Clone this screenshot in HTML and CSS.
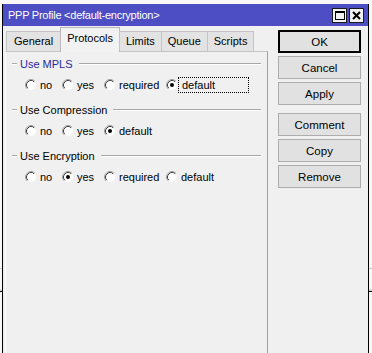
FILE: index.html
```html
<!DOCTYPE html>
<html>
<head>
<meta charset="utf-8">
<link rel="stylesheet" href="styles.css">
</head>
<body>
<div class="topstrip"></div>
<div class="window">
  <div class="titlebar">
    <span class="title">PPP Profile &lt;default-encryption&gt;</span>
    <div class="tbtns">
      <span class="tbtn"><svg width="10" height="9" viewBox="0 0 10 9"><rect x="0.5" y="0.5" width="9" height="8" fill="none" stroke="#000"/><rect x="0" y="0" width="10" height="2" fill="#000"/></svg></span>
      <span class="tbtn"><svg width="9" height="9" viewBox="0 0 9 9"><path d="M1 1 L8 8 M8 1 L1 8" stroke="#000" stroke-width="2"/></svg></span>
    </div>
  </div>
  <div class="content">
    <div class="leftcol">
      <div class="tabs">
        <span class="tab">General</span>
        <span class="tab active">Protocols</span>
        <span class="tab">Limits</span>
        <span class="tab">Queue</span>
        <span class="tab">Scripts</span>
      </div>
      <div class="panel">
        <div class="group">
          <div class="ghead blue"><span class="dash"></span><span class="gtitle">Use MPLS</span><span class="gline"></span></div>
          <div class="radios">
            <span class="radio w-no"><svg class="rb" viewBox="0 0 12 12"><circle cx="6" cy="6" r="5" fill="#fff"/><path d="M2.11 9.89 A5.5 5.5 0 0 1 9.89 2.11" fill="none" stroke="#a0a0a0"/><path d="M2.82 9.18 A4.5 4.5 0 0 1 9.18 2.82" fill="none" stroke="#404040"/></svg><span class="rl">no</span></span>
            <span class="radio w-yes"><svg class="rb" viewBox="0 0 12 12"><circle cx="6" cy="6" r="5" fill="#fff"/><path d="M2.11 9.89 A5.5 5.5 0 0 1 9.89 2.11" fill="none" stroke="#a0a0a0"/><path d="M2.82 9.18 A4.5 4.5 0 0 1 9.18 2.82" fill="none" stroke="#404040"/></svg><span class="rl">yes</span></span>
            <span class="radio w-req"><svg class="rb" viewBox="0 0 12 12"><circle cx="6" cy="6" r="5" fill="#fff"/><path d="M2.11 9.89 A5.5 5.5 0 0 1 9.89 2.11" fill="none" stroke="#a0a0a0"/><path d="M2.82 9.18 A4.5 4.5 0 0 1 9.18 2.82" fill="none" stroke="#404040"/></svg><span class="rl">required</span></span>
            <span class="radio"><svg class="rb" viewBox="0 0 12 12"><circle cx="6" cy="6" r="5" fill="#fff"/><path d="M2.11 9.89 A5.5 5.5 0 0 1 9.89 2.11" fill="none" stroke="#a0a0a0"/><path d="M2.82 9.18 A4.5 4.5 0 0 1 9.18 2.82" fill="none" stroke="#404040"/><circle cx="6" cy="6" r="2" fill="#000"/></svg><span class="rl focus">default</span></span>
          </div>
        </div>
        <div class="group">
          <div class="ghead"><span class="dash"></span><span class="gtitle">Use Compression</span><span class="gline"></span></div>
          <div class="radios">
            <span class="radio w-no"><svg class="rb" viewBox="0 0 12 12"><circle cx="6" cy="6" r="5" fill="#fff"/><path d="M2.11 9.89 A5.5 5.5 0 0 1 9.89 2.11" fill="none" stroke="#a0a0a0"/><path d="M2.82 9.18 A4.5 4.5 0 0 1 9.18 2.82" fill="none" stroke="#404040"/></svg><span class="rl">no</span></span>
            <span class="radio w-yes"><svg class="rb" viewBox="0 0 12 12"><circle cx="6" cy="6" r="5" fill="#fff"/><path d="M2.11 9.89 A5.5 5.5 0 0 1 9.89 2.11" fill="none" stroke="#a0a0a0"/><path d="M2.82 9.18 A4.5 4.5 0 0 1 9.18 2.82" fill="none" stroke="#404040"/></svg><span class="rl">yes</span></span>
            <span class="radio"><svg class="rb" viewBox="0 0 12 12"><circle cx="6" cy="6" r="5" fill="#fff"/><path d="M2.11 9.89 A5.5 5.5 0 0 1 9.89 2.11" fill="none" stroke="#a0a0a0"/><path d="M2.82 9.18 A4.5 4.5 0 0 1 9.18 2.82" fill="none" stroke="#404040"/><circle cx="6" cy="6" r="2" fill="#000"/></svg><span class="rl">default</span></span>
          </div>
        </div>
        <div class="group">
          <div class="ghead"><span class="dash"></span><span class="gtitle">Use Encryption</span><span class="gline"></span></div>
          <div class="radios">
            <span class="radio w-no"><svg class="rb" viewBox="0 0 12 12"><circle cx="6" cy="6" r="5" fill="#fff"/><path d="M2.11 9.89 A5.5 5.5 0 0 1 9.89 2.11" fill="none" stroke="#a0a0a0"/><path d="M2.82 9.18 A4.5 4.5 0 0 1 9.18 2.82" fill="none" stroke="#404040"/></svg><span class="rl">no</span></span>
            <span class="radio w-yes"><svg class="rb" viewBox="0 0 12 12"><circle cx="6" cy="6" r="5" fill="#fff"/><path d="M2.11 9.89 A5.5 5.5 0 0 1 9.89 2.11" fill="none" stroke="#a0a0a0"/><path d="M2.82 9.18 A4.5 4.5 0 0 1 9.18 2.82" fill="none" stroke="#404040"/><circle cx="6" cy="6" r="2" fill="#000"/></svg><span class="rl">yes</span></span>
            <span class="radio w-req"><svg class="rb" viewBox="0 0 12 12"><circle cx="6" cy="6" r="5" fill="#fff"/><path d="M2.11 9.89 A5.5 5.5 0 0 1 9.89 2.11" fill="none" stroke="#a0a0a0"/><path d="M2.82 9.18 A4.5 4.5 0 0 1 9.18 2.82" fill="none" stroke="#404040"/></svg><span class="rl">required</span></span>
            <span class="radio"><svg class="rb" viewBox="0 0 12 12"><circle cx="6" cy="6" r="5" fill="#fff"/><path d="M2.11 9.89 A5.5 5.5 0 0 1 9.89 2.11" fill="none" stroke="#a0a0a0"/><path d="M2.82 9.18 A4.5 4.5 0 0 1 9.18 2.82" fill="none" stroke="#404040"/></svg><span class="rl">default</span></span>
          </div>
        </div>
      </div>
    </div>
    <div class="rightcol">
      <button class="btn default">OK</button>
      <button class="btn">Cancel</button>
      <button class="btn">Apply</button>
      <button class="btn sep">Comment</button>
      <button class="btn">Copy</button>
      <button class="btn">Remove</button>
    </div>
  </div>
</div>
</body>
</html>
```
FILE: styles.css
```css
html, body {
  margin: 0;
  padding: 0;
}
body {
  width: 372px;
  height: 353px;
  overflow: hidden;
  font-family: "Liberation Sans", Arial, sans-serif;
  font-size: 11px;
  color: #000;
  background:
    linear-gradient(#c8c8c8, #c8c8c8) 0 268px / 100% 1px no-repeat,
    linear-gradient(#dcdcdc, #dcdcdc) 0 289px / 100% 2px no-repeat,
    linear-gradient(#000, #000) 0 291px / 100% 1px no-repeat,
    #f8f8f8;
}
.topstrip {
  height: 4px;
}
.window {
  margin-left: 2px;
  width: 367px;
  box-sizing: border-box;
  border-left: 1px solid #000;
  border-right: 1px solid #000;
  height: 349px;
  display: flex;
  flex-direction: column;
}
.titlebar {
  height: 22px;
  background: #4e4ec4;
  display: flex;
  align-items: center;
  padding-left: 5px;
  padding-right: 4px;
}
.title {
  color: #fff;
  font-size: 11px;
  letter-spacing: -0.25px;
  flex: 1;
}
.tbtns {
  display: flex;
  gap: 2px;
}
.tbtn {
  width: 13px;
  height: 13px;
  background: #f2f2f2;
  border: 1px solid #1a1a1a;
  display: flex;
  align-items: center;
  justify-content: center;
}
.tbtn svg {
  display: block;
}
.content {
  flex: 1;
  display: flex;
  background: #f0f0f0;
}
.leftcol {
  width: 265px;
  padding-left: 2px;
  box-sizing: border-box;
  display: flex;
  flex-direction: column;
}
.tabs {
  height: 25px;
  display: flex;
  align-items: flex-end;
  padding-left: 1px;
  position: relative;
  z-index: 1;
}
.tab {
  height: 19px;
  line-height: 19px;
  padding: 0 6px;
  background: #e3e3e3;
  border: 1px solid #c4c4c4;
  border-bottom: none;
  margin-right: -1px;
}
.tab:first-child {
  padding: 0 7px;
}
.tab.active {
  height: 24px;
  line-height: 20px;
  background: #f2f2f2;
  border-color: #b8b8b8;
  padding: 0 6px;
  margin-bottom: -1px;
}
.panel {
  flex: 1;
  border-top: 1px solid #c4c4c4;
  border-left: 1px solid #fff;
  border-right: 1px solid #a0a0a0;
  padding-top: 5px;
}
.group {
  margin-bottom: 10px;
}
.ghead {
  display: flex;
  align-items: center;
  height: 14px;
  padding-left: 6px;
  padding-right: 6px;
}
.ghead.blue .gtitle {
  color: #2a2aa0;
}
.dash {
  width: 5px;
  border-top: 1px solid #a8a8a8;
  border-bottom: 1px solid #fff;
  margin-right: 3px;
}
.gtitle {
  font-size: 11px;
  line-height: 14px;
}
.gline {
  flex: 1;
  border-top: 1px solid #a8a8a8;
  border-bottom: 1px solid #fff;
  margin-left: 6px;
}
.radios {
  display: flex;
  align-items: center;
  height: 16px;
  margin-top: 6px;
  padding-left: 19px;
}
.radio {
  display: flex;
  align-items: center;
  font-size: 11px;
}
.w-no {
  width: 37px;
}
.w-yes {
  width: 42px;
}
.w-req {
  width: 62px;
}
.rb {
  width: 12px;
  height: 12px;
  display: block;
}
.rl {
  margin-left: 3px;
}
.rl.focus {
  margin-left: 0;
  padding: 0 3px;
  width: 63px;
  height: 14px;
  line-height: 14px;
  border: 1px dotted #000;
}
.rightcol {
  flex: 1;
  padding-top: 4px;
  padding-left: 10px;
  display: flex;
  flex-direction: column;
  align-items: flex-start;
}
.btn {
  width: 83px;
  height: 23px;
  margin-bottom: 3px;
  background: #e1e1e1;
  border: 1px solid #adadad;
  font-family: "Liberation Sans", Arial, sans-serif;
  font-size: 11.5px;
  color: #000;
  padding: 0;
}
.btn.default {
  border: 1px solid #000;
  box-shadow: inset 0 0 0 1px #000;
}
.btn.sep {
  margin-top: 5px;
}
```
